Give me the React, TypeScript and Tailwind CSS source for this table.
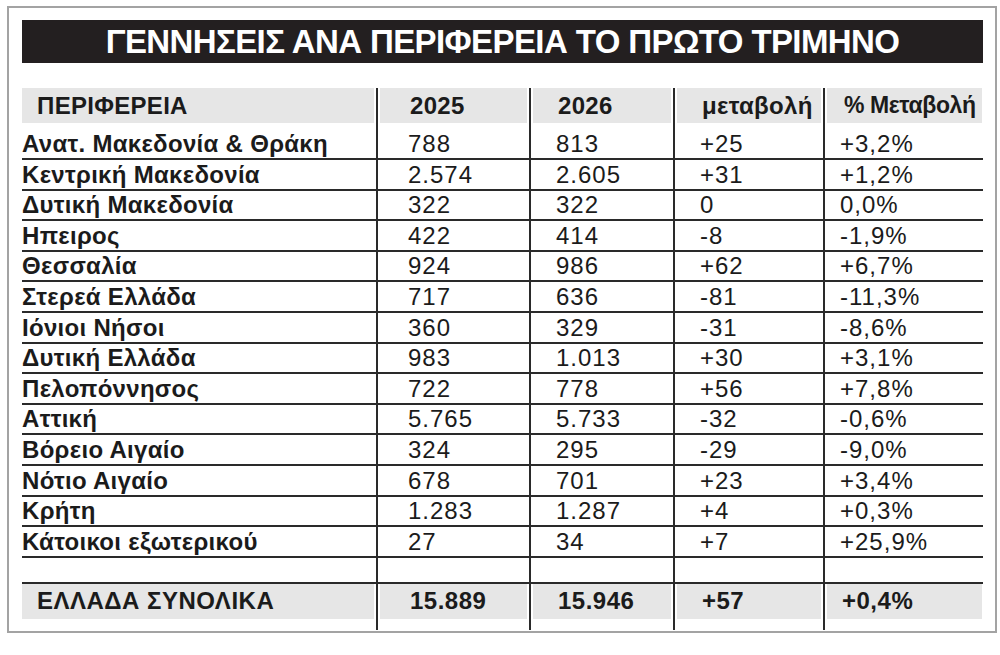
const rows: [string, string, string, string, string][] = [
  ["Ανατ. Μακεδονία & Θράκη", "788", "813", "+25", "+3,2%"],
  ["Κεντρική Μακεδονία", "2.574", "2.605", "+31", "+1,2%"],
  ["Δυτική Μακεδονία", "322", "322", "0", "0,0%"],
  ["Ηπειρος", "422", "414", "-8", "-1,9%"],
  ["Θεσσαλία", "924", "986", "+62", "+6,7%"],
  ["Στερεά Ελλάδα", "717", "636", "-81", "-11,3%"],
  ["Ιόνιοι Νήσοι", "360", "329", "-31", "-8,6%"],
  ["Δυτική Ελλάδα", "983", "1.013", "+30", "+3,1%"],
  ["Πελοπόννησος", "722", "778", "+56", "+7,8%"],
  ["Αττική", "5.765", "5.733", "-32", "-0,6%"],
  ["Βόρειο Αιγαίο", "324", "295", "-29", "-9,0%"],
  ["Νότιο Αιγαίο", "678", "701", "+23", "+3,4%"],
  ["Κρήτη", "1.283", "1.287", "+4", "+0,3%"],
  ["Κάτοικοι εξωτερικού", "27", "34", "+7", "+25,9%"],
]

const cols = "grid grid-cols-[354px_153px_144px_150px_159px]"
const vline = "border-l-2 border-[#2a2a2a]"
// text offsets from the left edge of each column
const pad = ["pl-0", "pl-[30px]", "pl-[25px]", "pl-[25px]", "pl-[15px]"]

const GrayRow = ({ cells, first, last = "" }: { cells: string[]; first: string; last?: string }) => (
  <div className={cols}>
    {cells.map((c, i) => (
      <div key={i} className={`${i > 0 ? vline + " pl-[2px]" : ""} ${i < 4 ? "pr-[2px]" : ""}`}>
        <div
          className={`h-[35px] bg-[#e6e6e6] flex items-center whitespace-nowrap overflow-hidden ${
            i === 0 ? first : pad[i]
          } ${i === 4 ? last : ""}`}
        >
          {c}
        </div>
      </div>
    ))}
  </div>
)

const App = () => {
  return (
    <div className="w-[1000px] h-[655px] bg-white text-[#1b1b1b] font-['Liberation_Sans',Arial,sans-serif]">
      <div className="ml-[7px] mt-[6px] w-[990px] h-[627px] border-2 border-[#a3a3a3] pl-[13px] pr-[12px] pt-[12px]">
        <div className="h-[43px] bg-[#231f20] flex items-center justify-center overflow-hidden">
          <span className="text-white font-bold text-[33px] leading-none tracking-[-0.6px] whitespace-nowrap">
            ΓΕΝΝΗΣΕΙΣ ΑΝΑ ΠΕΡΙΦΕΡΕΙΑ ΤΟ ΠΡΩΤΟ ΤΡΙΜΗΝΟ
          </span>
        </div>

        <div className="mt-[25px]">
          <div className="font-bold text-[24px] tracking-[0.3px]">
            <GrayRow
              cells={["ΠΕΡΙΦΕΡΕΙΑ", "2025", "2026", "μεταβολή", "% Μεταβολή"]}
              first="pl-[15px]"
              last="pl-[17px] text-[23px] tracking-[-0.4px]"
            />
          </div>

          {rows.map((r, ri) => (
            <div
              key={ri}
              className={`${cols} border-b-2 border-[#2a2a2a] ${ri === 0 ? "h-[37px]" : "h-[30.6px]"}`}
            >
              {r.map((c, i) => (
                <div
                  key={i}
                  className={`${i > 0 ? vline : ""} ${pad[i]} flex items-end pb-[1px] whitespace-nowrap text-[24px] leading-[26px] ${
                    i === 0 ? "font-bold tracking-[0.3px]" : "font-normal tracking-[1px]"
                  }`}
                >
                  {c}
                </div>
              ))}
            </div>
          ))}

          <div className={`${cols} h-[26px] border-b-2 border-[#2a2a2a]`}>
            {[0, 1, 2, 3, 4].map((i) => (
              <div key={i} className={i > 0 ? vline : ""} />
            ))}
          </div>

          <div className="font-bold text-[24px] tracking-[0.5px] h-[46px] [&>div]:h-full">
            <GrayRow cells={["ΕΛΛΑΔΑ ΣΥΝΟΛΙΚΑ", "15.889", "15.946", "+57", "+0,4%"]} first="pl-[15px]" />
          </div>
        </div>
      </div>
    </div>
  )
}

export default App
